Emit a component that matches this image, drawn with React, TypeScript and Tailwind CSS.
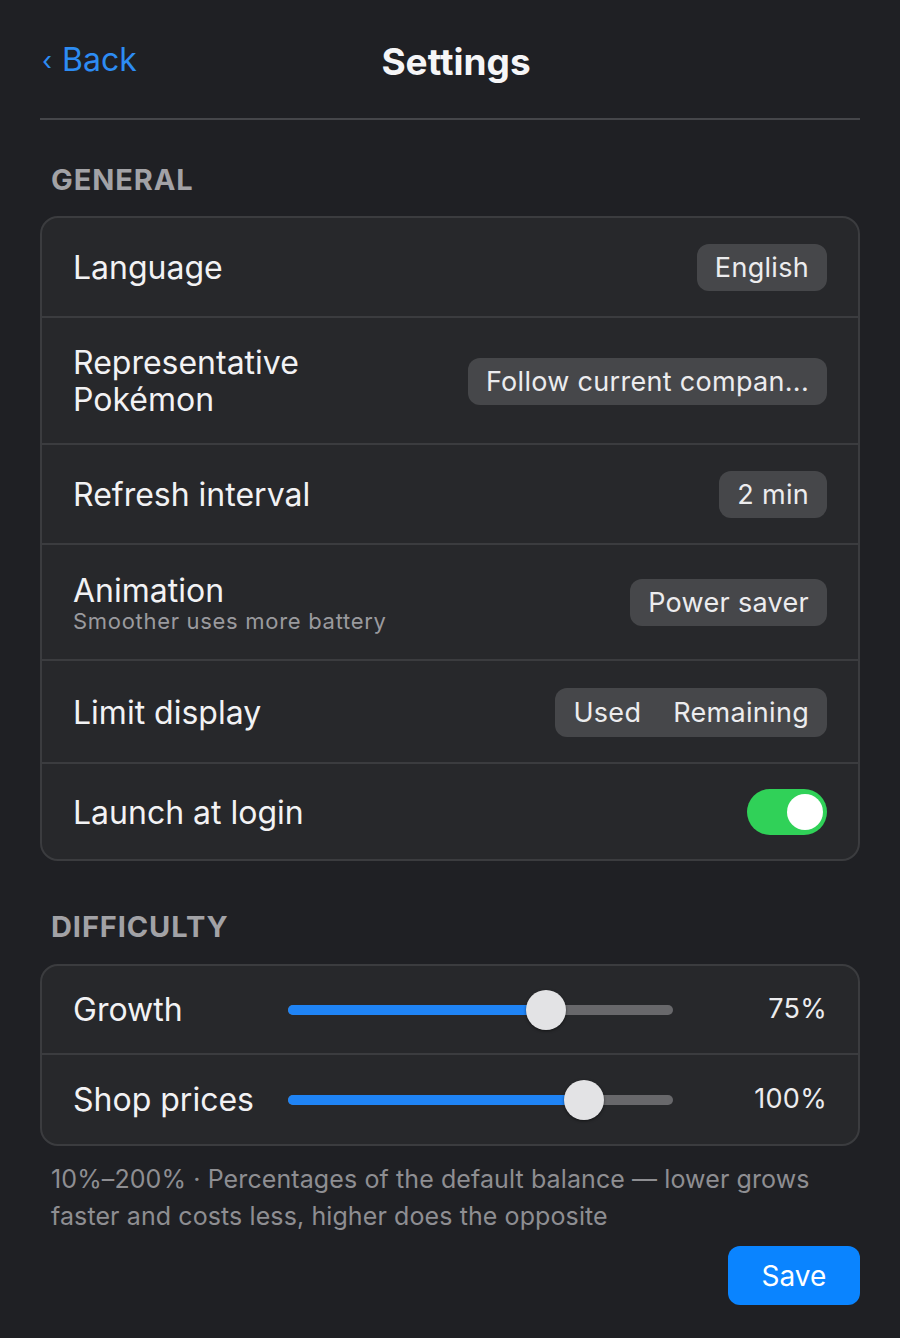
import type { ReactNode } from "react";

const font = { fontFamily: "Inter, 'Noto Sans', sans-serif" };

function Pill({ children }: { children: ReactNode }) {
  return (
    <div className="h-[47px] px-[18px] pt-[2px] flex items-center rounded-[12px] bg-[#46474a] text-[27px] tracking-[0.3px] text-[#ececee] whitespace-nowrap">
      {children}
    </div>
  );
}

function Row({
  label,
  sub,
  height,
  last,
  children,
}: {
  label: ReactNode;
  sub?: string;
  height: string;
  last?: boolean;
  children: ReactNode;
}) {
  return (
    <div
      className={`flex items-center justify-between pl-[31px] pr-[31px] pt-[1px] ${height} ${
        last ? "" : "border-b-2 border-[#3b3c3f]"
      }`}
    >
      <div className="flex flex-col">
        <div className="text-[32px] leading-[37px] text-[#f2f2f4]">{label}</div>
        {sub && <div className="text-[22px] leading-[25px] text-[#9a9a9e] tracking-[0.7px]">{sub}</div>}
      </div>
      {children}
    </div>
  );
}

function Slider({ pct }: { pct: number }) {
  return (
    <div className="relative w-[385px] h-[10px] rounded-full bg-[#68686b]">
      <div className="absolute left-0 top-0 h-full rounded-full bg-[#1f84f6]" style={{ width: `${pct}%` }} />
      <div
        className="absolute top-1/2 w-[40px] h-[40px] -translate-x-1/2 -translate-y-1/2 rounded-full bg-[#e3e3e5] shadow-[0_1px_3px_rgba(0,0,0,0.5)]"
        style={{ left: `${pct}%` }}
      />
    </div>
  );
}

function SliderRow({ label, pct, value, last }: { label: string; pct: number; value: string; last?: boolean }) {
  return (
    <div className={`flex items-center h-[89px] pl-[31px] pr-[31px] ${last ? "" : "border-b-2 border-[#3b3c3f]"}`}>
      <div className="w-[215px] text-[32px] text-[#f2f2f4]">{label}</div>
      <Slider pct={pct} />
      <div className="flex-1 text-right text-[27px] tracking-[0.3px] text-[#ececee]">{value}</div>
    </div>
  );
}

export default function App() {
  return (
    <div className="min-h-[1338px] bg-[#1f2024] px-[40px]" style={font}>
      <div className="relative flex items-center h-[120px] pt-[8px] border-b-2 border-[#45464a]">
        <div className="flex items-center gap-[10px] text-[#2d8cf3] text-[32px] pl-[2px] -mt-[6px]">
          <span className="text-[26px]">‹</span>
          <span>Back</span>
        </div>
        <div className="absolute left-0 right-0 text-center font-bold text-[37px] text-[#f5f5f7] pl-[12px] -mt-[2px]">
          Settings
        </div>
      </div>

      <div className="pt-[44px] pb-[20px] pl-[11px] text-[29px] font-bold text-[#a2a2a6] tracking-[0.9px] leading-[32px]">
        GENERAL
      </div>
      <div className="rounded-[18px] border-2 border-[#3b3c3f] bg-[#27282b] overflow-hidden">
        <Row label="Language" height="h-[100px]">
          <Pill>English</Pill>
        </Row>
        <Row
          label={
            <>
              Representative
              <br />
              Pokémon
            </>
          }
          height="h-[127px]"
        >
          <Pill>Follow current compan...</Pill>
        </Row>
        <Row label="Refresh interval" height="h-[100px]">
          <Pill>2 min</Pill>
        </Row>
        <Row label="Animation" sub="Smoother uses more battery" height="h-[116px]">
          <Pill>Power saver</Pill>
        </Row>
        <Row label="Limit display" height="h-[103px]">
          <div className="h-[49px] px-[18px] pt-[2px] flex items-center gap-[32px] rounded-[12px] bg-[#46474a] text-[27px] tracking-[0.3px] text-[#ececee]">
            <span>Used</span>
            <span>Remaining</span>
          </div>
        </Row>
        <Row label="Launch at login" height="h-[95px]" last>
          <div className="w-[80px] h-[46px] rounded-full bg-[#30d158] flex items-center justify-end pr-[4px]">
            <div className="w-[36px] h-[36px] rounded-full bg-white" />
          </div>
        </Row>
      </div>

      <div className="pt-[50px] pb-[21px] pl-[11px] text-[29px] font-bold text-[#a2a2a6] tracking-[0.9px] leading-[32px]">
        DIFFICULTY
      </div>
      <div className="rounded-[18px] border-2 border-[#3b3c3f] bg-[#27282b] overflow-hidden">
        <SliderRow label="Growth" pct={67} value="75%" />
        <SliderRow label="Shop prices" pct={77} value="100%" last />
      </div>

      <p className="pt-[15px] pl-[11px] pr-[10px] text-[25px] tracking-[0.1px] leading-[37px] text-[#8e8e92]">
        10%–200% · Percentages of the default balance — lower grows faster and costs less, higher does the opposite
      </p>
      <div className="flex justify-end pt-[11px]">
        <button className="w-[132px] h-[59px] rounded-[12px] bg-[#0a84ff] text-white text-[28px]">Save</button>
      </div>
    </div>
  );
}
